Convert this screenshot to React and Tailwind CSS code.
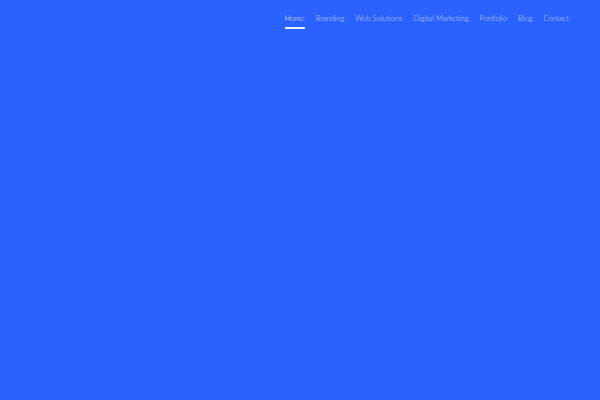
const links = ['Home', 'Branding', 'Web Solutions', 'Digital Marketing', 'Portfolio', 'Blog', 'Contact']

const App = () => {
    return (
        <div className="h-[400px] w-[600px] bg-[#2962ff] font-['Lato','Liberation_Sans',sans-serif]">
            <nav className="flex justify-end pr-[31px] pt-[13px]">
                <ul className="flex gap-[11px]">
                    { links.map((l, idx) => (
                        <li key={l} className="flex flex-col">
                            <a className={`text-[7.5px] leading-[12px] font-light ${idx === 0 ? 'text-white/90' : 'text-white/75'}`}>{l}</a>
                            { idx === 0 && <span className="mt-[2px] h-[2px] w-full bg-white/90" /> }
                        </li>
                    ))}
                </ul>
            </nav>
        </div>
    )
}

export default App
